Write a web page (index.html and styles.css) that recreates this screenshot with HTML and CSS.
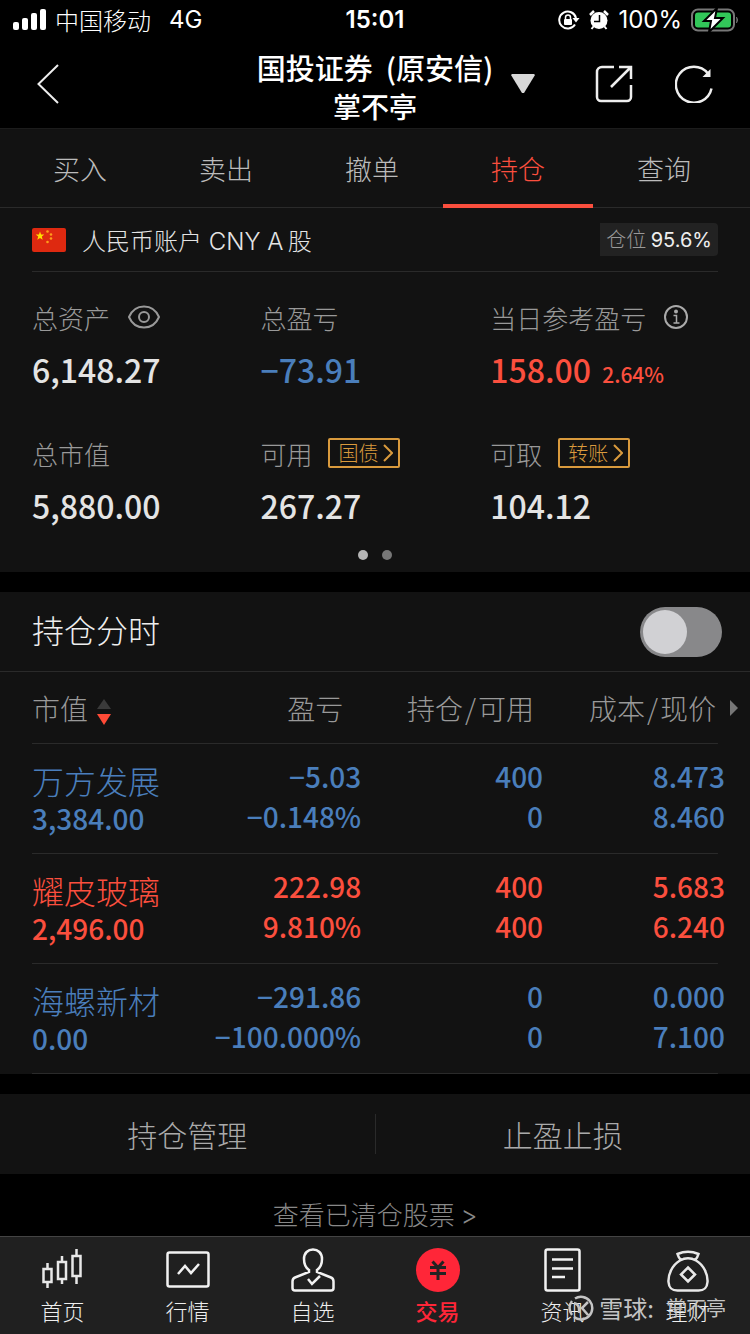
FILE: index.html
```html
<!DOCTYPE html>
<html lang="zh-CN">
<head>
  <meta charset="UTF-8" />
  <meta name="viewport" content="width=device-width, initial-scale=1" />
  <title>持仓</title>
  <link rel="stylesheet" href="styles.css">
</head>
<body>
  <div class="status">
    <div class="status-left">
      <svg width="34" height="22" viewBox="0 0 34 22" fill="#fff"><rect x="0" y="13" width="6" height="8" rx="2"/><rect x="9" y="9" width="6" height="12" rx="2"/><rect x="18" y="4" width="6" height="17" rx="2"/><rect x="27" y="0" width="6" height="21" rx="2"/></svg>
      <span class="carrier">中国移动</span>
      <span class="network">4G</span>
    </div>
    <div class="time">15:01</div>
    <div class="status-right">
      <svg width="22" height="20" viewBox="0 0 22 20"><path d="M17 14.5A8.5 8.5 0 1 1 18 8" fill="none" stroke="#fff" stroke-width="2"/><path d="M14.5 8h7L18 12.500z" fill="#fff"/><rect x="6" y="9" width="8" height="6" rx="1" fill="#fff"/><path d="M7.500 9.500V7.500a2.500 2.500 0 0 1 5 0v2" fill="none" stroke="#fff" stroke-width="1.500"/></svg>
      <svg width="20" height="20" viewBox="0 0 20 20"><circle cx="10" cy="10.500" r="8.500" fill="#fff"/><path d="M1 5L5 1M19 5L15 1" stroke="#fff" stroke-width="2.500"/><path d="M4.500 16.500L2.500 19M15.500 16.500l2 2.500" stroke="#fff" stroke-width="2"/><path d="M10.500 5v6.500H5" fill="none" stroke="#000" stroke-width="1.500"/></svg>
      <span class="percent">100%</span>
      <svg width="48" height="24" viewBox="0 0 48 24"><rect x="1" y="1.500" width="42" height="21" rx="6" fill="none" stroke="#777" stroke-width="2"/><rect x="4" y="4.500" width="36" height="15" rx="3" fill="#32c759"/><path d="M45.500 9q2 3 0 6" fill="#777" stroke="#777"/><path d="M26 0L13 13h7l-2 11 14-14h-8z" fill="#fff" stroke="#000" stroke-width="2"/></svg>
    </div>
  </div>

  <header class="header">
    <div class="header-left">
      <button class="icon-btn" aria-label="返回">
        <svg width="22" height="40" viewBox="0 0 22 40"><path d="M21 1L1.500 20 21 39" fill="none" stroke="#eee" stroke-width="2"/></svg>
      </button>
    </div>
    <h1 class="title">国投证券&nbsp; (原安信)<span>掌不亭</span></h1>
    <div class="header-right">
      <button class="icon-btn" aria-label="切换账户">
        <svg width="24" height="20" viewBox="0 0 24 20"><path d="M1 0h22l1 1-11 18h-2L0 1z" fill="#d8d8d8"/></svg>
      </button>
      <button class="icon-btn push" aria-label="分享">
        <svg width="38" height="38" viewBox="0 0 38 38" fill="none" stroke="#eee" stroke-width="2.500"><path d="M19 2H7a5 5 0 0 0-5 5v25a4 4 0 0 0 4 4h26a4 4 0 0 0 4-4V20M36 14V2H24M36 2L16 22"/></svg>
      </button>
      <button class="icon-btn" aria-label="刷新">
        <svg width="38" height="38" viewBox="0 0 38 38"><path d="M36.500 23.500A18 18 0 1 1 33 8.500" fill="none" stroke="#eee" stroke-width="2.500"/><path d="M35.500 4v8h-8z" fill="#eee"/></svg>
      </button>
    </div>
  </header>

  <nav class="tabs">
    <a href="#">买入</a>
    <a href="#">卖出</a>
    <a href="#">撤单</a>
    <a href="#" class="active">持仓</a>
    <a href="#">查询</a>
  </nav>

  <main>
    <section class="panel account">
      <div class="account-head">
        <svg width="34" height="24" viewBox="0 0 34 24"><rect width="34" height="24" rx="2" fill="#de2910"/><path d="M8 3.500l1.100 3 3.200.1-2.500 2 .9 3.100L8 9.900l-2.700 1.800.9-3.100-2.500-2 3.200-.1z" fill="#ffde00"/><g fill="#ff9d1c"><circle cx="15.500" cy="3.500" r="1.300"/><circle cx="19" cy="6.500" r="1.300"/><circle cx="19" cy="10.500" r="1.300"/><circle cx="15.500" cy="14" r="1.300"/></g></svg>
        <span class="account-name">人民币账户 CNY A&thinsp;股</span>
        <span class="badge">仓位 <b>95.6%</b></span>
      </div>
      <dl class="assets">
        <div>
          <dt>总资产
            <button class="icon-btn" aria-label="隐藏金额"><svg width="32" height="24" viewBox="0 0 32 24" fill="none" stroke="#999" stroke-width="2"><path d="M1 12C7-2 25-2 31 12 25 26 7 26 1 12z"/><circle cx="16" cy="12" r="5"/></svg></button>
          </dt>
          <dd>6,148.27</dd>
        </div>
        <div>
          <dt>总盈亏</dt>
          <dd class="down">−73.91</dd>
        </div>
        <div>
          <dt>当日参考盈亏
            <button class="icon-btn" aria-label="说明"><svg width="24" height="24" viewBox="0 0 24 24"><circle cx="12" cy="12" r="11" fill="none" stroke="#aaa" stroke-width="2"/><circle cx="12" cy="6.500" r="2" fill="#aaa"/><path d="M9.500 10.500H12.500V18M9.500 18h6" fill="none" stroke="#aaa" stroke-width="1.500"/></svg></button>
          </dt>
          <dd class="up">158.00 <small>2.64%</small></dd>
        </div>
        <div>
          <dt>总市值</dt>
          <dd>5,880.00</dd>
        </div>
        <div>
          <dt class="tagged">可用
            <button class="tag">国债<svg width="10" height="18" viewBox="0 0 10 18"><path d="M1 1l8 8-8 8" fill="none" stroke="#d99a3d" stroke-width="2"/></svg></button>
          </dt>
          <dd>267.27</dd>
        </div>
        <div>
          <dt class="tagged">可取
            <button class="tag">转账<svg width="10" height="18" viewBox="0 0 10 18"><path d="M1 1l8 8-8 8" fill="none" stroke="#d99a3d" stroke-width="2"/></svg></button>
          </dt>
          <dd>104.12</dd>
        </div>
      </dl>
      <div class="dots"><i class="on"></i><i></i></div>
    </section>

    <section class="panel">
      <label class="switch-row"><span>持仓分时</span>
        <input type="checkbox" role="switch" class="switch">
      </label>
      <table class="holdings">
        <thead>
          <tr>
            <th>市值<svg width="14" height="26" viewBox="0 0 14 26"><path d="M7 0l7 10H0z" fill="#3a3a3a"/><path d="M0 15h14L7 26z" fill="#ff4a36"/></svg></th>
            <th class="profit">盈亏</th>
            <th>持仓<span>/</span>可用</th>
            <th>成本<span>/</span>现价<svg class="more" width="8" height="16" viewBox="0 0 8 16"><path d="M0 0l8 8-8 8z" fill="#777"/></svg></th>
          </tr>
        </thead>
        <tbody>
          <tr class="down">
            <td><strong>万方发展</strong>3,384.00</td>
            <td>−5.03<br>−0.148%</td>
            <td>400<br>0</td>
            <td>8.473<br>8.460</td>
          </tr>
          <tr class="up">
            <td><strong>耀皮玻璃</strong>2,496.00</td>
            <td>222.98<br>9.810%</td>
            <td>400<br>400</td>
            <td>5.683<br>6.240</td>
          </tr>
          <tr class="down">
            <td><strong>海螺新材</strong>0.00</td>
            <td>−291.86<br>−100.000%</td>
            <td>0<br>0</td>
            <td>0.000<br>7.100</td>
          </tr>
        </tbody>
      </table>
    </section>

    <div class="panel actions">
      <button>持仓管理</button>
      <button>止盈止损</button>
    </div>
    <a href="#" class="cleared">查看已清仓股票 <span>&gt;</span></a>
  </main>

  <footer class="tabbar">
    <a href="#">
      <svg width="44" height="44" viewBox="0 0 44 44" fill="none" stroke="#e8e8e8" stroke-width="2.500"><path d="M6.500 15v6M6.500 34v6M2.500 21h8v13h-8zM21 8v6M21 31v5M17 14h8v17h-8zM35.500 1v7M35.500 28v8M31.500 8h8v20h-8z"/></svg>
      首页
    </a>
    <a href="#">
      <svg width="44" height="44" viewBox="0 0 44 44" fill="none" stroke="#f2f2f2" stroke-width="2.500"><rect x="1.500" y="4.500" width="41" height="34" rx="2"/><path d="M12 26l7-8 6 7 8-9"/></svg>
      行情
    </a>
    <a href="#">
      <svg width="44" height="44" viewBox="0 0 44 44" fill="none" stroke="#f2f2f2" stroke-width="2.500"><path d="M18 22c-3-2-5-6-5-11 0-6 4-9.500 9-9.500s9 3.500 9 9.500c0 5-2 9-5 11v2l14 5.500q2.500 1 2.500 4V40q0 2.500-2.500 2.500H4Q1.500 42.500 1.500 40v-6.500q0-3 2.500-4L18 24z"/><path d="M17 31l4 5 8-8"/></svg>
      自选
    </a>
    <a href="#" class="active">
      <svg width="44" height="44" viewBox="0 0 44 44"><circle cx="22" cy="22" r="22" fill="#ff2638"/><path d="M16.500 13.500l5.500 6 5.500-6M14 19.500h16M14 25.500h16M22 19v13" fill="none" stroke="#222" stroke-width="3"/></svg>
      交易
    </a>
    <a href="#">
      <svg width="44" height="44" viewBox="0 0 44 44" fill="none" stroke="#f2f2f2" stroke-width="2.500"><rect x="4.500" y="1.500" width="34" height="41" rx="2"/><path d="M11 11.500h21M11 20.500h21M11 29h13"/></svg>
      资讯
    </a>
    <a href="#">
      <svg width="44" height="44" viewBox="0 0 44 44" fill="none" stroke="#e8e8e8" stroke-width="2.500"><path d="M15 12c-2-2-3-4-3.500-6Q22 1.500 32.500 6c-.5 2-1.500 4-3.500 6M14 12.500Q22 8 30 12.500C38 17 42 27 41.500 34c-.5 7-4 8.500-9 8.500h-21c-5 0-8.500-1.500-9-8.500C2 27 6 17 14 12.500zM22 19.500l7 7-7 7-7-7z"/></svg>
      理财
    </a>
    <div class="watermark">
      <svg width="26" height="26" viewBox="0 0 26 26" fill="none" stroke="#c4c4c4" stroke-width="2.500"><path d="M7 3.500A11.300 11.300 0 1 1 6 22M4 20A11.300 11.300 0 0 1 4 6M6 8q6 1 5 10M20 7l-6 6 6 7"/></svg>
      <span>雪球:</span><small>掌不亭</small>
    </div>
  </footer>
</body>
</html>
```
FILE: styles.css
```css
* { box-sizing:border-box; }
body {
  margin:0; min-height:100vh; display:flex; flex-direction:column;
  background:#000; color:#e4e4e4;
  font-family:"Noto Sans CJK SC", sans-serif; font-weight:300; font-size:26px;
}
a { color:inherit; text-decoration:none; }
button { font:inherit; color:inherit; background:none; border:0; padding:0; cursor:pointer; }
svg { display:block; flex:none; }
.icon-btn { display:block; }
.up { color:#fb4f3e; }
.down { color:#4a7ebb; }

/* status bar */
.status { display:grid; grid-template-columns:1fr auto 1fr; align-items:center; height:40px; padding:0 13px; color:#fff; }
.status-left, .status-right { display:flex; align-items:center; }
.carrier { font-size:24px; line-height:36px; margin-left:8px; }
.network { font:400 24px/36px Inter, sans-serif; margin-left:18px; }
.time { font:600 24px/36px Inter, sans-serif; }
.status-right { justify-content:flex-end; gap:9px; margin-right:-2px; }
.percent { font:400 24px/36px Inter, sans-serif; }

/* header */
.header { display:grid; grid-template-columns:1fr auto 1fr; align-items:center; height:88px; padding:0 37px; }
.title { margin:0; padding-top:6px; font-size:29px; font-weight:500; line-height:39px; text-align:center; color:#fff; }
.title span { display:block; font-size:28px; }
.header-right { display:flex; align-items:center; gap:42px; padding-left:18px; }
.header-right .push { margin-left:auto; }

.tabs { display:flex; height:80px; padding:0 13px 0 7px; background:#121212; border-top:1px solid #1c1c1c; border-bottom:1px solid #2a2a2a; }
.tabs a { flex:1; position:relative; text-align:center; font-size:27px; line-height:80px; color:#bbb; }
.tabs .active { color:#fb4f3e; }
.tabs .active::after { content:""; position:absolute; left:-2px; right:-2px; bottom:-1px; height:4px; background:#fb4f3e; }

main { flex:1; }
.panel { background:#121212; margin-bottom:20px; }

/* account */
.account { padding:0 32px 12px; }
.account-head { display:flex; align-items:center; height:64px; border-bottom:1px solid #2a2a2a; }
.account-name { flex:1; margin-left:16px; padding-top:5px; font-family:Inter, "Noto Sans CJK SC", sans-serif; font-size:24px; line-height:36px; }
.badge {
  padding:0 6px; font-size:20px; line-height:32px; color:#999;
  background:#222; border-radius:0 4px 4px 0;
}
.badge b { font-family:Inter, sans-serif; font-weight:400; color:#eee; }
.assets { display:grid; grid-template-columns:33.3% 33.5% 1fr; row-gap:41px; margin:0; padding-top:27px; }
.assets dt { display:flex; align-items:center; gap:18px; height:36px; color:#999; white-space:nowrap; }
.assets .tagged { gap:16px; }
.assets dd { margin:14px 0 0; font-size:32px; font-weight:500; line-height:40px; white-space:nowrap; }
.assets small { font-size:21px; margin-left:4px; }
.tag {
  display:flex; align-items:center; justify-content:space-between; width:72px; height:30px; padding:0 5px 0 8px;
  border:2px solid #d99a3d; border-radius:2px; color:#d99a3d; font-size:20px; line-height:26px;
}
.dots { display:flex; justify-content:center; gap:14px; margin-top:25px; }
.dots i { width:10px; height:10px; border-radius:50%; background:#777; }
.dots .on { background:#b5b5b5; }

/* holdings */
.switch-row {
  display:flex; justify-content:space-between; align-items:center; height:80px; padding:0 28px 0 32px;
  font-size:32px; border-bottom:1px solid #2a2a2a; color:#eee;
}
.switch-row span { padding-bottom:6px; }
.switch { appearance:none; margin:0; width:82px; height:50px; padding:3px; border-radius:25px; background:#88888a; }
.switch::before { content:""; display:block; width:44px; height:44px; border-radius:50%; background:#d1d1d4; }
.switch:checked { background:#fb4f3e; }
.switch:checked::before { margin-left:auto; }
.holdings { width:calc(100% - 57px); margin-left:32px; border-collapse:collapse; table-layout:fixed; }
.holdings tr { background:linear-gradient(#2a2a2a, #2a2a2a) left bottom / calc(100% - 7px) 1px no-repeat; }
.holdings th { position:relative; width:26.25%; height:72px; padding:0 9px 0 0; font-size:28px; font-weight:300; line-height:40px; text-align:right; color:#999; white-space:nowrap; }
.holdings th:first-child { width:24%; text-align:left; }
.holdings th.profit { width:23.5%; padding-right:18px; }
.holdings th span { margin:0 2px; }
.holdings th svg { display:inline-block; vertical-align:middle; margin-left:9px; }
.holdings th .more { position:absolute; right:-13px; top:28px; margin:0; }
.holdings td { height:110px; padding:12px 0 18px; font-size:28px; font-weight:500; line-height:40px; text-align:right; vertical-align:top; white-space:nowrap; }
.holdings td:first-child { padding:16px 0 14px; text-align:left; line-height:36px; }
.holdings strong { display:block; font-size:32px; font-weight:300; line-height:40px; }

.actions { display:flex; height:80px; margin:0; align-items:center; }
.actions button { flex:1; height:40px; font-size:30px; line-height:40px; color:#aaa; }
.actions button + button { border-left:1px solid #2a2a2a; }
.cleared { display:block; text-align:center; line-height:40px; padding-top:20px; color:#888; }
.cleared span { font-family:Inter, sans-serif; }

/* bottom bar */
.tabbar { position:relative; display:flex; height:98px; background:#202020; border-top:1px solid #444; }
.tabbar a { flex:1; display:flex; flex-direction:column; align-items:center; padding-top:11px; font-size:22px; line-height:36px; color:#eee; }
.tabbar .active { color:#ff2638; font-weight:500; }
.watermark { position:absolute; right:24px; bottom:10px; display:flex; align-items:center; font-size:24px; font-weight:400; line-height:32px; color:#c4c4c4; }
.watermark span { margin:0 12px 0 5px; }
.watermark small { font-size:20px; }
```
